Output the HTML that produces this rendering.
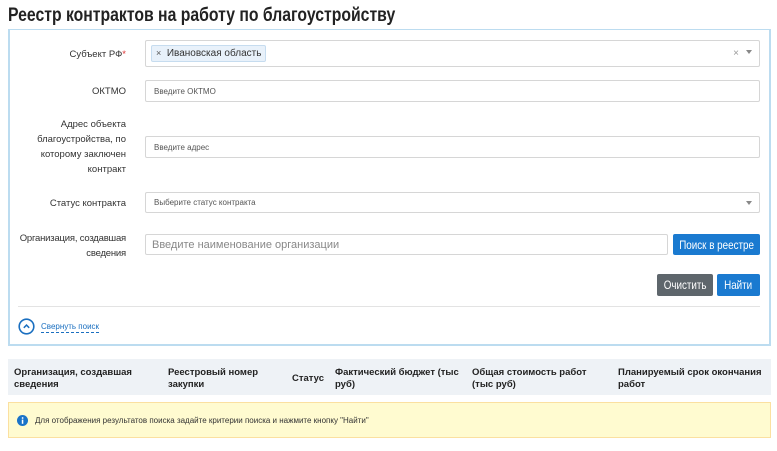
<!DOCTYPE html>
<html><head><meta charset="utf-8"><style>
*{box-sizing:border-box;margin:0;padding:0}
body{width:777px;height:451px;background:#fff;font-family:"Liberation Sans","DejaVu Sans",sans-serif;color:#333;position:relative;overflow:hidden}
.a{position:absolute}
.title{left:8px;top:5px;font-size:19px;font-weight:bold;color:#222;transform:scaleX(.83);transform-origin:left;white-space:nowrap}
.panel{left:8px;top:29px;width:763px;height:317px;border:2px solid #bcdcf0;border-top-width:1px}
.lbl{font-size:9.5px;color:#333;text-align:right;width:118px;left:8px;line-height:15px}
.inp{left:145px;width:615px;border:1px solid #d6d6d6;border-radius:2px;font-size:8px;color:#555;padding-left:8px;display:flex;align-items:center;background:#fff}
.btn{color:#fff;font-size:12px;border-radius:2px;display:flex;align-items:center;justify-content:center}
.btn span{display:inline-block;transform:scaleX(.82);white-space:nowrap}
.th{font-size:9.5px;font-weight:bold;color:#222;line-height:12px;white-space:nowrap}
.arr{position:absolute;right:7px;top:50%;margin-top:-2px;width:0;height:0;border-left:3.5px solid transparent;border-right:3.5px solid transparent;border-top:4px solid #888}
</style></head><body>
<div class="a title">Реестр контрактов на работу по благоустройству</div>
<div class="a panel"></div>

<div class="a lbl" style="top:47px">Субъект РФ<span style="color:#d33">*</span></div>
<div class="a inp" style="top:40px;height:27px;padding-left:5px">
 <span style="background:#e8f1fa;border:1px solid #c6dcef;border-radius:2px;font-size:10px;color:#333;padding:1px 4px;line-height:13px"><span style="font-size:9px;color:#555">×</span>&nbsp;&nbsp;Ивановская область</span>
 <span style="position:absolute;right:20px;top:7px;color:#999;font-size:10px">×</span><span class="arr" style="margin-top:-4px"></span></div>

<div class="a lbl" style="top:84px">ОКТМО</div>
<div class="a inp" style="top:80px;height:22px">Введите ОКТМО</div>

<div class="a lbl" style="top:117px;left:18px;width:108px">Адрес объекта благоустройства, по которому заключен контракт</div>
<div class="a inp" style="top:136px;height:22px">Введите адрес</div>

<div class="a lbl" style="top:196px">Статус контракта</div>
<div class="a inp" style="top:192px;height:21px">Выберите статус контракта<span class="arr"></span></div>

<div class="a lbl" style="top:231px;left:0;width:126px;letter-spacing:-0.2px">Организация, создавшая<br>сведения</div>
<div class="a inp" style="top:234px;height:21px;width:523px;font-size:11px;color:#888;padding-left:6px">Введите наименование организации</div>
<div class="a btn" style="left:673px;top:234px;width:87px;height:21px;background:#1a7ad0"><span>Поиск в реестре</span></div>

<div class="a btn" style="left:657px;top:274px;width:56px;height:22px;background:#5e666c"><span>Очистить</span></div>
<div class="a btn" style="left:717px;top:274px;width:43px;height:22px;background:#1a7ad0"><span>Найти</span></div>

<div class="a" style="left:18px;top:306px;width:742px;height:1px;background:#e3e3e3"></div>
<svg class="a" style="left:18px;top:318px" width="17" height="17" viewBox="0 0 17 17"><circle cx="8.5" cy="8.5" r="7.3" fill="none" stroke="#1a6fc0" stroke-width="1.6"/><path d="M5.8 9.8 L8.5 7.1 L11.2 9.8" fill="none" stroke="#1a6fc0" stroke-width="1.5"/></svg>
<div class="a" style="left:41px;top:322px;font-size:8px;color:#1a6fc0;border-bottom:1px dashed #1a6fc0;line-height:10px">Свернуть поиск</div>

<div class="a" style="left:8px;top:359px;width:763px;height:36px;background:#eef2f6"></div>
<div class="a th" style="left:14px;top:367px">Организация, создавшая<br>сведения</div>
<div class="a th" style="left:168px;top:367px">Реестровый номер<br>закупки</div>
<div class="a th" style="left:292px;top:373px">Статус</div>
<div class="a th" style="left:335px;top:367px">Фактический бюджет (тыс<br>руб)</div>
<div class="a th" style="left:472px;top:367px">Общая стоимость работ<br>(тыс руб)</div>
<div class="a th" style="left:618px;top:367px">Планируемый срок окончания<br>работ</div>

<div class="a" style="left:8px;top:402px;width:763px;height:36px;background:#fffbd0;border:1px solid #fbe0a0"></div>
<svg class="a" style="left:17px;top:415px" width="11" height="11" viewBox="0 0 11 11"><circle cx="5.5" cy="5.5" r="5.5" fill="#1a73c8"/><rect x="4.8" y="4.6" width="1.5" height="4.2" fill="#fff"/><circle cx="5.6" cy="3" r=".9" fill="#fff"/></svg>
<div class="a" style="left:35px;top:416px;font-size:8px;color:#333">Для отображения результатов поиска задайте критерии поиска и нажмите кнопку "Найти"</div>
</body></html>
